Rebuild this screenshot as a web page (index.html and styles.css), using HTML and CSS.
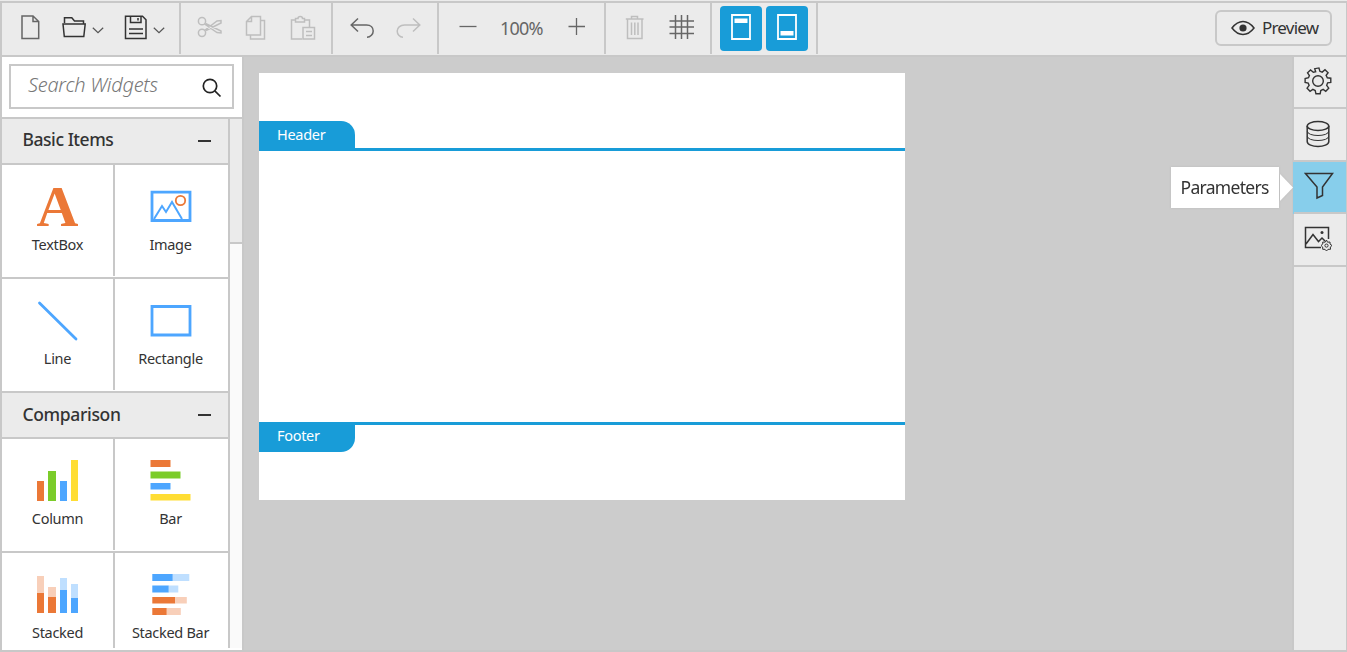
FILE: index.html
```html
<!DOCTYPE html>
<html lang="en">
<head>
<meta charset="utf-8">
<title>Report Designer</title>
<link rel="stylesheet" href="styles.css">
</head>
<body>
<div class="app">
  <header class="toolbar">
    <div class="group files">
      <svg class="icon file" width="19" height="25" viewBox="0 0 19 25"><path d="M1 1H12L17.700 6.500V23.500H1ZM12 1V6.500H17.700"/></svg>
      <svg class="icon dark open" width="25" height="23" viewBox="0 0 25 23"><path d="M2.500 7V1.700H9.800L12.500 5H21.500V8M1 8H23.200L21.800 20.500H2.300Z"/></svg>
      <svg class="icon chevron c1" width="12" height="7" viewBox="0 0 12 7"><path d="M.8 .8L6 5.700L11.200 .8"/></svg>
      <svg class="icon dark save" width="23" height="25" viewBox="0 0 23 25"><path d="M1.500 1.200H18.500L22 4.700V23.500H1.500ZM6.500 1.200V7.500H17V1.200M14 3V5.500M5 14H19M5 18.500H19"/></svg>
      <svg class="icon chevron c2" width="12" height="7" viewBox="0 0 12 7"><path d="M.8 .8L6 5.700L11.200 .8"/></svg>
    </div>
    <div class="group edit disabled">
      <svg class="icon cut" width="26" height="24" viewBox="0 0 26 24"><circle cx="5" cy="5.200" r="3.600"/><circle cx="5" cy="16.800" r="3.600"/><path d="M7.500 8L20 16.500L24 17V15L8.500 7.500M7.500 14.500L20 5L24 4.500V7L9 14.500"/></svg>
      <svg class="icon copy" width="22" height="26" viewBox="0 0 22 26"><path d="M6.500 1.500H15.500V20H1.500V6.500ZM6.500 1.500V6.500H1.500M15.500 5.500H19.500V24H5.500V20"/></svg>
      <svg class="icon paste" width="26" height="26" viewBox="0 0 26 26"><path d="M12 24H1.500V5H5.500M14.500 5H19.500V12.500M5.500 3.500H8C8 .7 12.500 .7 12.500 3.500H14.500V7H5.500ZM13 12.500H24.500V24H13ZM16 16.500H22M16 20.500H22"/></svg>
    </div>
    <div class="group history">
      <svg class="icon undo" width="25" height="22" viewBox="0 0 25 22"><path d="M8 1.500L1.200 8L8 14.500M1.200 8H16.500C21 8 23.200 11 23.200 14S20.500 20.200 17 20.200"/></svg>
      <svg class="icon redo faded" width="25" height="22" viewBox="0 0 25 22"><path d="M17 1.500L23.800 8L17 14.500M23.800 8H8.500C4 8 1.200 11 1.200 14S3.500 20.200 7 20.200"/></svg>
    </div>
    <div class="group zoom">
      <svg class="icon minus" width="18" height="18" viewBox="0 0 18 18"><path d="M.5 9.500H17.500"/></svg>
      <span class="percent">100%</span>
      <svg class="icon plus" width="18" height="18" viewBox="0 0 18 18"><path d="M.5 9.500H17M8.500 1V18"/></svg>
    </div>
    <div class="group tools">
      <svg class="icon trash faded" width="20" height="26" viewBox="0 0 20 26"><path d="M.8 4H18.500M6.500 3.500V1.500H12.500V3.500M2.500 4.500V23.500H17V4.500"/><path d="M6.500 7.500V20M9.800 7.500V20M13 7.500V20"/></svg>
      <svg class="icon gridicon" width="26" height="26" viewBox="0 0 26 26"><path d="M.5 7H25M.5 13H25M.5 19.500H25M6.500 1V25M12.500 1V25M18.500 1V25"/></svg>
    </div>
    <div class="group bands">
      <button class="band" type="button" aria-label="Header"><svg width="20" height="26" viewBox="0 0 20 26"><path class="frame" d="M1 1H19V25H1Z"/><path class="fill" d="M3.500 4.500H16.500V9H3.500Z"/></svg></button>
      <button class="band" type="button" aria-label="Footer"><svg width="20" height="26" viewBox="0 0 20 26"><path class="frame" d="M1 1H19V25H1Z"/><path class="fill" d="M3.500 17H16.500V21.500H3.500Z"/></svg></button>
    </div>
    <button class="preview" type="button">
      <svg class="icon dark" width="24" height="16" viewBox="0 0 24 16"><path d="M1 8Q6 1.500 12 1.500T23 8Q18 14.500 12 14.500T1 8Z"/><circle class="pupil" cx="12" cy="8" r="3.600"/></svg>
      <span>Preview</span>
    </button>
  </header>
  <div class="body">
    <aside class="sidebar">
      <div class="search"><div class="searchbox"><span>Search Widgets</span><svg class="icon" width="20" height="20" viewBox="0 0 20 20"><circle cx="8" cy="8" r="6.700"/><path d="M12.800 12.800L18.500 18.500"/></svg></div></div>
      <div class="widgets">
        <div class="list">
          <div class="section"><span class="title">Basic Items</span><i class="collapse"></i></div>
          <div class="row">
            <div class="cell"><b class="letter">A</b><span>TextBox</span></div>
            <div class="cell"><svg width="42" height="42" viewBox="0 0 42 42"><path class="blueline" d="M2 6.200H40V34.500H2Z"/><path class="bluethin" d="M4 33L12 20L16 26L22 16L32 33"/><circle class="sun" cx="30.500" cy="14.500" r="4.700"/></svg><span>Image</span></div>
          </div>
          <div class="row">
            <div class="cell"><svg width="42" height="42" viewBox="0 0 42 42"><path class="blueline round" d="M3.500 3L40 39"/></svg><span>Line</span></div>
            <div class="cell"><svg width="42" height="42" viewBox="0 0 42 42"><path class="blueline" d="M2 6.500H40V35H2Z"/></svg><span>Rectangle</span></div>
          </div>
          <div class="section"><span class="title comp">Comparison</span><i class="collapse"></i></div>
          <div class="row">
            <div class="cell"><svg width="42" height="42" viewBox="0 0 42 42"><path class="orange" d="M1 21h7v20h-7z"/><path class="green" d="M12 11h8v30h-8z"/><path class="blue" d="M24 21h7v20h-7z"/><path class="yellow" d="M35 0h7v41h-7z"/></svg><span>Column</span></div>
            <div class="cell"><svg width="42" height="42" viewBox="0 0 42 42"><path class="orange" d="M.5 0h20v7h-20z"/><path class="green" d="M.5 11.500h30v7h-30z"/><path class="blue" d="M.5 23h20v6.500h-20z"/><path class="yellow" d="M.5 34h40v6.500h-40z"/></svg><span>Bar</span></div>
          </div>
          <div class="row">
            <div class="cell"><svg width="42" height="42" viewBox="0 0 42 42"><path class="peach" d="M1 2h7v17h-7zM12 13h8v10h-8z"/><path class="orange" d="M1 19h7v20h-7zM12 23h8v16h-8z"/><path class="sky" d="M24 4h7v12h-7zM35 10h7v14h-7z"/><path class="blue" d="M24 16h7v23h-7zM35 24h7v15h-7z"/></svg><span>Stacked</span></div>
            <div class="cell"><svg width="42" height="42" viewBox="0 0 42 42"><path class="blue" d="M2.300 0h20.500v7h-20.500zM2.300 11.500h16.500v7h-16.500z"/><path class="sky" d="M22.800 0h16.500v7h-16.500zM18.800 11.500h9.500v7h-9.500z"/><path class="orange" d="M2.300 23h23v6.500h-23zM2.300 34h14.500v7h-14.500z"/><path class="peach" d="M25.300 23h11.500v6.500h-11.500zM16.800 34h14v7h-14z"/></svg><span>Stacked Bar</span></div>
          </div>
        </div>
        <div class="scroll"><div class="thumb"></div></div>
      </div>
    </aside>
    <main class="canvas">
      <div class="page">
        <div class="head"><span class="tab">Header</span></div>
        <div class="foot"><span class="tab">Footer</span></div>
      </div>
    </main>
    <nav class="rail">
      <div class="item"><svg class="icon dark" width="28" height="28" viewBox="0 0 30 30"><path d="M12.500 5L11.500 1.800L16 1L17 4.600L19.500 5.500L22.500 3L25.800 6.200L23.700 9L25 11.500L28.700 12L28.700 16.500L25.300 17L24.300 19.600L26.500 22.700L23.300 26L20.500 24L18 25.200L17.300 28.700H12.800L12 25.200L9.500 24L6.500 26L3.300 22.700L5.500 19.800L4.500 17.300L1.200 16.500V12.300L4.800 11.500L5.800 9.200L3.800 6.200L7 3.200L10 5.700Z"/><circle cx="15" cy="15" r="5.700"/></svg></div>
      <div class="item"><svg class="icon dark db" width="26" height="28" viewBox="0 0 26 28"><ellipse cx="13" cy="6" rx="10.800" ry="4.500"/><path d="M2.200 6V21.500C2.200 28 23.800 28 23.800 21.500V6"/><path class="thin" d="M2.200 11C2.200 17 23.800 17 23.800 11M2.200 16C2.200 22 23.800 22 23.800 16"/></svg></div>
      <div class="item active"><svg class="icon dark funnel" width="30" height="28" viewBox="0 0 30 28"><path d="M1.500 1.500H28.500L18.500 15V23.500L13 26V15Z"/></svg>
        <div class="tip"><span>Parameters</span><i></i></div></div>
      <div class="item"><svg class="icon dark imgset" width="29" height="26" viewBox="0 0 29 26"><path d="M17 21.500H1.500V1.500H24.500V13M2 18L9 8.500L14.500 15.500L18 12L21 15"/><circle class="pupil" cx="18" cy="6.500" r="1.500"/><path class="smallgear" d="M22.500 14L23.500 16.200L26 16L26 18L28 19.500L26.300 21L26.500 23.300L24 23.300L22.500 25L21 23.300L18.700 23.300L18.700 21L17 19.500L18.800 18L18.700 16L21.200 16.200Z"/><circle class="smallgear" cx="22.500" cy="19.600" r="1.600"/></svg></div>
    </nav>
  </div>
</div>
</body>
</html>
```
FILE: styles.css
```css
* { box-sizing: border-box; }
body { margin: 0; background: #ebebeb; color: #333; font-family: "Noto Sans", "Open Sans", sans-serif; overflow: hidden; }
button { font: inherit; color: inherit; padding: 0; }
svg { display: block; flex: none; }
.app { width: 1347px; height: 651px; margin-top: 1px; border: 2px solid #c8c8c8; border-right-width: 1px; display: flex; flex-direction: column; }
.icon { fill: none; stroke: #666; stroke-width: 1.5; }
.dark { stroke: #333; }
.toolbar { height: 54px; flex: none; border-bottom: 2px solid #c8c8c8; background: #ebebeb; display: flex; }
.group { height: 51px; border-right: 2px solid #c8c8c8; display: flex; align-items: flex-start; flex: none; }
.files { width: 179px; padding-left: 19px; }
.file { margin-top: 12px; }
.open { margin: 13px 0 0 22px; }
.chevron { stroke-width: 1.2; stroke: #555; }
.c1 { margin: 24px 0 0 5px; }
.save { margin: 12px 0 0 20px; }
.c2 { margin: 24px 0 0 6px; }
.edit { width: 152px; padding-left: 16px; }
.disabled .icon, .faded { stroke: #bebebe; }
.cut { margin-top: 13px; }
.copy { margin: 12px 0 0 22px; }
.paste { margin: 12px 0 0 23px; }
.history { width: 106px; padding-left: 17px; }
.undo, .redo { margin-top: 14px; }
.redo { margin-left: 21px; }
.zoom { width: 167px; padding-left: 20px; }
.zoom .icon { margin-top: 14px; stroke-width: 1.3; }
.percent { width: 46px; margin: 11px 22px 0 23px; line-height: 28px; font-size: 18px; color: #666; letter-spacing: -.8px; white-space: nowrap; }
.tools { width: 106px; padding-left: 19px; }
.trash { margin-top: 12px; }
.gridicon { margin: 11px 0 0 24px; }
.bands { width: 106px; padding: 3px 0 0 8px; gap: 4px; }
.band { width: 42px; height: 45px; border: 0; border-radius: 4px; background: #189cd8; display: flex; justify-content: center; padding-top: 8px; align-items: flex-start; }
.frame { fill: none; stroke: #fff; stroke-width: 1.8; }
.fill { fill: #fff; }
.preview { width: 117px; height: 36px; margin: 7px 14px 0 auto; border: 2px solid #c8c8c8; border-radius: 6px; background: #ebebeb; display: flex; align-items: center; padding-left: 14px; font-size: 17px; letter-spacing: -.8px; }
.preview span { margin: -2px 0 0 7px; }
.pupil { fill: #333; stroke: none; }
.body { flex: 1; min-height: 0; display: flex; }
.sidebar { width: 240px; background: #fff; display: flex; flex-direction: column; flex: none; }
.search { height: 62px; flex: none; border-bottom: 2px solid #c8c8c8; padding: 7px 0 0 7px; }
.searchbox { width: 225px; height: 45px; border: 2px solid #c8c8c8; display: flex; padding-left: 17px; color: #777; font-size: 20px; font-weight: 300; font-style: italic; line-height: 38px; letter-spacing: -.25px; }
.searchbox span { width: 174px; white-space: nowrap; }
.searchbox .icon { margin-top: 12px; stroke: #222; stroke-width: 1.7; }
.widgets { height: 529px; display: flex; overflow: hidden; }
.list { width: 228px; flex: none; border-right: 2px solid #c8c8c8; }
.section { height: 46px; border-bottom: 2px solid #c8c8c8; background: #ebebeb; display: flex; justify-content: space-between; padding: 0 17px 0 20.500px; }
.title { line-height: 41px; font-size: 17.500px; font-weight: 500; letter-spacing: -.45px; white-space: nowrap; }
.comp { line-height: 42px; letter-spacing: -.35px; }
.collapse { width: 13px; height: 2px; margin-top: 21px; background: #333; }
.row { height: 114px; border-bottom: 2px solid #c8c8c8; display: flex; }
.cell { width: 113px; height: 111px; display: flex; flex-direction: column; align-items: center; padding: 21px 2px 0 0; font-size: 14.500px; letter-spacing: -.3px; }
.cell:first-child { border-right: 2px solid #c8c8c8; padding-right: 0; }
.cell span { margin-top: 5px; line-height: 20px; white-space: nowrap; }
.cell svg { margin: 0 0 1px; }
.cell:first-child svg { margin-left: -1px; }
.letter { height: 43px; font: bold 58px/41px "Liberation Serif", serif; color: #eb7837; letter-spacing: 0; }
.orange { fill: #eb7837; } .green { fill: #7bcc2a; } .blue { fill: #4da6ff; } .yellow { fill: #ffdd33; } .peach { fill: #f8cfb9; } .sky { fill: #bfdfff; }
.blueline { fill: none; stroke: #4da6ff; stroke-width: 2.8; }
.round { stroke-linecap: round; }
.bluethin { fill: none; stroke: #4da6ff; stroke-width: 2; }
.sun { fill: #fff; stroke: #eb7837; stroke-width: 1.8; }
.scroll { width: 12px; background: #fafafa; }
.thumb { height: 125px; background: #ebebeb; border-bottom: 2px solid #c8c8c8; }
.canvas { flex: 1; background: #ccc; border: solid #c8c8c8; border-width: 0 2px; padding: 16px 0 0 15px; }
.page { width: 646px; height: 427px; background: #fff; display: flex; flex-direction: column; justify-content: space-between; }
.head { height: 78px; border-bottom: 3px solid #189cd8; padding-top: 48px; }
.foot { height: 78px; border-top: 3px solid #189cd8; }
.tab { display: block; width: 96px; height: 27px; padding-left: 18px; background: #189cd8; color: #fff; font-size: 14.500px; letter-spacing: -.3px; line-height: 27px; }
.head .tab { border-radius: 0 14px 0 0; }
.foot .tab { border-radius: 0 0 14px 0; line-height: 21px; }
.rail { width: 52px; background: #ebebeb; flex: none; }
.item { height: 52px; border-bottom: 2px solid #c8c8c8; display: flex; justify-content: center; align-items: center; padding: 0 4px 2px 0; }
.item:nth-child(even) { height: 53px; }
.thin { stroke-width: 1; }
.funnel { margin-left: 2px; }
.active { position: relative; background: #87ceeb; box-shadow: -1px 0 #87ceeb; }
.smallgear { stroke-width: 1; }
.imgset { margin-left: 1px; }
.tip { position: absolute; right: 53px; top: 5px; display: flex; align-items: center; filter: drop-shadow(0 0 1px #bbb); }
.tip span { width: 108px; height: 41px; background: #fff; padding-left: 9.500px; line-height: 41px; font-size: 17.500px; letter-spacing: -.7px; white-space: nowrap; }
.tip i { width: 13px; height: 27px; margin-left: 1px; background: #fff; clip-path: polygon(0 0, 100% 50%, 0 100%); }
```
